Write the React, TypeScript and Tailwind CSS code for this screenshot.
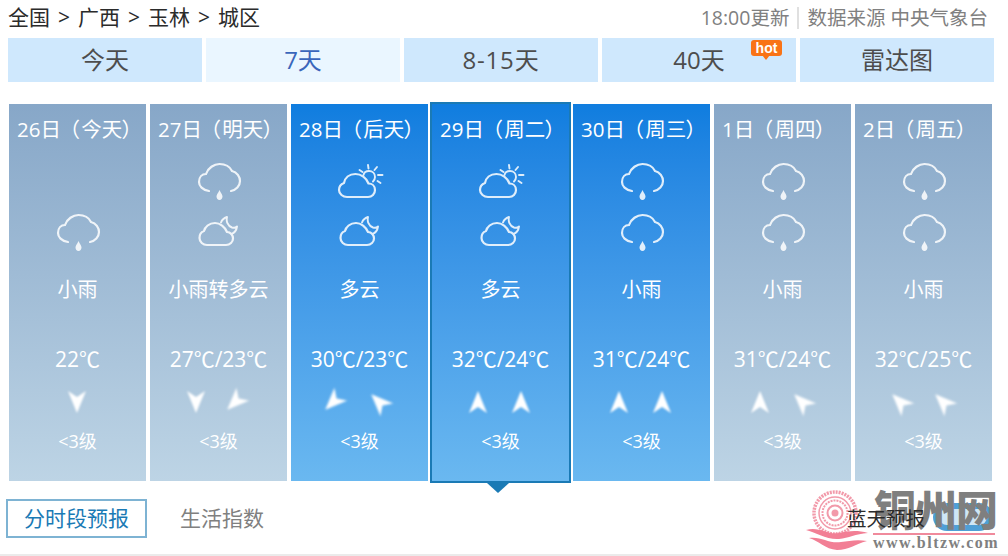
import React from "react";

const FONT = "font-['Open_Sans','Noto_Sans_CJK_SC',sans-serif]";

function Rain() {
  return (
    <svg width="60" height="51" viewBox="0 0 60 51" fill="none" className="opacity-85 blur-[0.3px]">
      <path d="M20 35C13.5 34 10 30 10 26C10 21 13 18 17 18C19 12 25 8 30.5 8C37 8 41 11 43 15C48 16 51 21 51 25C51 30 47 34 42 35" stroke="white" strokeWidth="2.2" strokeLinecap="round" />
      <path d="M30.5 34C29 37.5 27.5 38.5 27.5 40.5C27.5 42.4 28.8 44 30.5 44C32.2 44 33.5 42.4 33.5 40.5C33.5 38.5 32 37.5 30.5 34Z" fill="white" />
    </svg>
  );
}

function MoonCloud() {
  return (
    <svg width="60" height="51" viewBox="0 0 60 51" fill="none" className="opacity-85 blur-[0.3px]">
      <path d="M18 38H37C41 38 44 35 44 31.5C44 28 41.5 25 38 25C36 20 31 16 26 16C20 16 16 20 15 24C12 25 10.5 28 10.5 31C10.5 35 14 38 18 38Z" stroke="white" strokeWidth="2.2" strokeLinejoin="round" />
      <path d="M32 15.5C33 12.5 35 11 38 10C37 14 38.5 19 43 20.5C45 21 47 20.5 48 19.5C47.5 23 45.5 26 42.5 27" stroke="white" strokeWidth="1.9" strokeLinejoin="round" strokeLinecap="round" />
    </svg>
  );
}

function SunCloud() {
  return (
    <svg width="60" height="51" viewBox="0 0 60 51" fill="none" className="opacity-85 blur-[0.3px]">
      <path d="M17 41H38C42 41 45 38 45 34C45 30 42 27.5 38.5 27.5C36.5 22 31 18 25.5 18C19 18 15 22 14 27C11 28 9 31 9 34C9 38 13 41 17 41Z" stroke="white" strokeWidth="2.2" strokeLinejoin="round" />
      <path d="M33.5 19C34 16.5 36.5 15 39 15C42.5 15 45 17.5 45 21C45 23 44 24.5 43 25.5" stroke="white" strokeWidth="1.9" strokeLinecap="round" />
      <path d="M29.5 14L32.5 16M38 9L38.5 12.5M47 11L44.5 14M48 19H52.5M47.5 25L50.5 27" stroke="white" strokeWidth="1.9" strokeLinecap="round" />
    </svg>
  );
}

function Dart({ cls }: { cls: string }) {
  return (
    <svg width="24" height="24" viewBox="0 0 24 24" className={`blur-[0.8px] ${cls}`}>
      <path d="M12 1L21 23L12 17L3 23Z" fill="white" />
    </svg>
  );
}

const UP = "rotate-0 -translate-x-[1px]";
const DOWN = "rotate-180 -translate-x-[1px]";
const SW = "rotate-[225deg] -translate-x-[5px]";
const NW = "-rotate-45 -translate-x-[2px]";

type Day = {
  day: string;
  label: string;
  icons: ("rain" | "moon" | "sun" | null)[];
  weather: string;
  temp: string;
  wind: string[];
  blue?: boolean;
  active?: boolean;
};

const days: Day[] = [
  { day: "26日", label: "今天", icons: [null, "rain"], weather: "小雨", temp: "22℃", wind: [DOWN] },
  { day: "27日", label: "明天", icons: ["rain", "moon"], weather: "小雨转多云", temp: "27℃/23℃", wind: [DOWN, SW] },
  { day: "28日", label: "后天", icons: ["sun", "moon"], weather: "多云", temp: "30℃/23℃", wind: [SW, NW], blue: true },
  { day: "29日", label: "周二", icons: ["sun", "moon"], weather: "多云", temp: "32℃/24℃", wind: [UP, UP], blue: true, active: true },
  { day: "30日", label: "周三", icons: ["rain", "rain"], weather: "小雨", temp: "31℃/24℃", wind: [UP, UP], blue: true },
  { day: "1日", label: "周四", icons: ["rain", "rain"], weather: "小雨", temp: "31℃/24℃", wind: [UP, NW] },
  { day: "2日", label: "周五", icons: ["rain", "rain"], weather: "小雨", temp: "32℃/25℃", wind: [NW, NW] },
];

function Icon({ kind }: { kind: "rain" | "moon" | "sun" | null }) {
  if (kind === "rain") return <Rain />;
  if (kind === "moon") return <MoonCloud />;
  if (kind === "sun") return <SunCloud />;
  return null;
}

function Card({ d }: { d: Day }) {
  const bg = d.blue
    ? "bg-gradient-to-b from-[#0f7ddf] to-[#6ab8f0]"
    : "bg-gradient-to-b from-[#87a7c8] to-[#bdd4e5]";
  const frame = d.active ? "-my-[2px] -mx-[2px] border-2 border-[#1a7ab5] box-content" : "";
  return (
    <div className={`relative w-[137px] shrink-0 flex flex-col text-white ${bg} ${frame}`}>
      <div className="h-[51px] pl-2 flex items-center text-[20.5px] whitespace-nowrap">
        <span>{d.day}</span>
        <span className="ml-[8px] [font-feature-settings:'palt']">（</span>
        <span className="ml-[2px]">{d.label}</span>
        <span className="[font-feature-settings:'palt']">）</span>
      </div>
      <div className="mt-[1px] flex flex-col items-center">
        {d.icons.map((k, i) => (
          <div key={i} className="h-[51px] w-[60px]">
            <Icon kind={k} />
          </div>
        ))}
      </div>
      <div className="mt-[17px] h-[30px] leading-[30px] text-center text-[20px] whitespace-nowrap">{d.weather}</div>
      <div className="mt-[39px] h-[30px] leading-[30px] text-center text-[21px] whitespace-nowrap">{d.temp}</div>
      <div className="mt-[13px] h-[30px] flex items-center justify-center gap-[19px]">
        {d.wind.map((w, i) => (
          <Dart key={i} cls={w} />
        ))}
      </div>
      <div className="mt-[9px] h-[30px] leading-[30px] text-center text-[18px] whitespace-nowrap">&lt;3级</div>
      {d.active && (
        <div className="absolute left-[55px] -bottom-[12px] w-0 h-0 border-x-[11px] border-x-transparent border-t-[10px] border-t-[#1a7ab5]" />
      )}
    </div>
  );
}

const tabs = ["今天", "7天", "8-15天", "40天", "雷达图"];

export default function App() {
  return (
    <div className={`relative w-[1008px] h-[556px] overflow-hidden bg-white flex flex-col ${FONT}`}>
      <div className="h-[38px] pl-2 pr-5 pb-[2px] flex items-center justify-between">
        <div className="flex items-center text-[21px] text-[#2b2b2b] gap-[8px]">
          <span>全国</span><span>&gt;</span><span>广西</span><span>&gt;</span><span>玉林</span><span>&gt;</span><span>城区</span>
        </div>
        <div className="flex items-center text-[19.5px] text-[#808080]">
          <span>18:00更新</span>
          <span className="mx-[8px] w-[2px] h-[22px] bg-[#e0e0e0]" />
          <span>数据来源 中央气象台</span>
        </div>
      </div>

      <div className="ml-2 flex gap-1 h-[44px]">
        {tabs.map((t, i) => (
          <div
            key={t}
            className={`relative w-[194px] flex items-center justify-center text-[24px] ${i === 1 ? "bg-[#eaf6ff] text-[#3a66bb]" : "bg-[#cfe8fd] text-[#4d4d4d]"} ${i === 2 ? "tracking-[0.8px]" : ""}`}
          >
            {t}
            {i === 3 && (
              <div className="absolute left-[149px] top-[2px] w-[31px] h-[16px] rounded-[3px] bg-[#f97316] flex items-center justify-center text-[14px] leading-none font-bold text-white font-['Liberation_Sans',sans-serif]">
                hot
                <div className="absolute left-[11px] top-[15px] w-0 h-0 border-x-[4px] border-x-transparent border-t-[5px] border-t-[#f97316]" />
              </div>
            )}
          </div>
        ))}
      </div>

      <div className="mt-[22px] ml-[9px] h-[377px] flex gap-1">
        {days.map((d) => (
          <Card key={d.day} d={d} />
        ))}
      </div>

      <div className="mt-[18px] ml-[6px] mr-[83px] h-[39px] flex items-center text-[21px]">
        <div className="w-[141px] h-[39px] border-2 border-[#7eb3d3] text-[#1a7ab5] flex items-center justify-center">分时段预报</div>
        <div className="ml-[33px] text-[#808080]">生活指数</div>
        <div className="relative z-10 ml-auto text-[19.5px] text-[#2b2b2b]">蓝天预报</div>
      </div>

      <div className="absolute left-0 right-0 bottom-0 h-[2px] bg-[#ebebeb]" />

      {/* watermark */}
      <div className="absolute left-[805px] top-[490px] w-[200px] h-[62px]">
        <svg width="66" height="62" viewBox="0 0 66 62" fill="none" className="absolute left-0 top-0">
          <circle cx="30" cy="23" r="21" stroke="#f29aaa" strokeWidth="3.5" strokeDasharray="2 1" />
          <circle cx="30" cy="23" r="16" stroke="#f29aaa" strokeWidth="1.5" />
          <circle cx="30" cy="23" r="12.5" stroke="#f29aaa" strokeWidth="2" strokeDasharray="2 1" />
          <circle cx="30" cy="23" r="7.5" stroke="#f29aaa" strokeWidth="2" />
          <circle cx="30" cy="23" r="3.5" fill="#f29aaa" />
          <path d="M1 40C14 36 22 45 34 43C44 41 52 40 63 43C50 44 44 48 34 49C22 50 10 42 1 40Z" fill="#f27f95" />
          <path d="M4 48C16 46 24 54 36 52C44 51 52 49 62 51C50 54 44 60 32 60C20 59 14 51 4 48Z" fill="#f27f95" />
        </svg>
        <div className="absolute left-[128px] top-[13px] w-[60px] h-[28px] rounded-full border-[6px] border-[#4f9fd6] bg-[#cfe6f5]" />
        <div className="absolute left-[69px] top-[1px] text-[42px] leading-[42px] font-black text-[#7f7f7f] whitespace-nowrap tracking-[-1px] font-['Liberation_Serif','Noto_Sans_CJK_SC',serif]">铜州网</div>
        <div className="absolute left-[68px] top-[43px] w-[122px] h-[2px] bg-[#f08a9c]" />
        <div className="absolute left-[68px] top-[45px] text-[16px] leading-[15px] font-bold text-[#808080] whitespace-nowrap tracking-[1.5px] font-['Liberation_Serif',serif]">www.bltzw.com</div>
      </div>
    </div>
  );
}
